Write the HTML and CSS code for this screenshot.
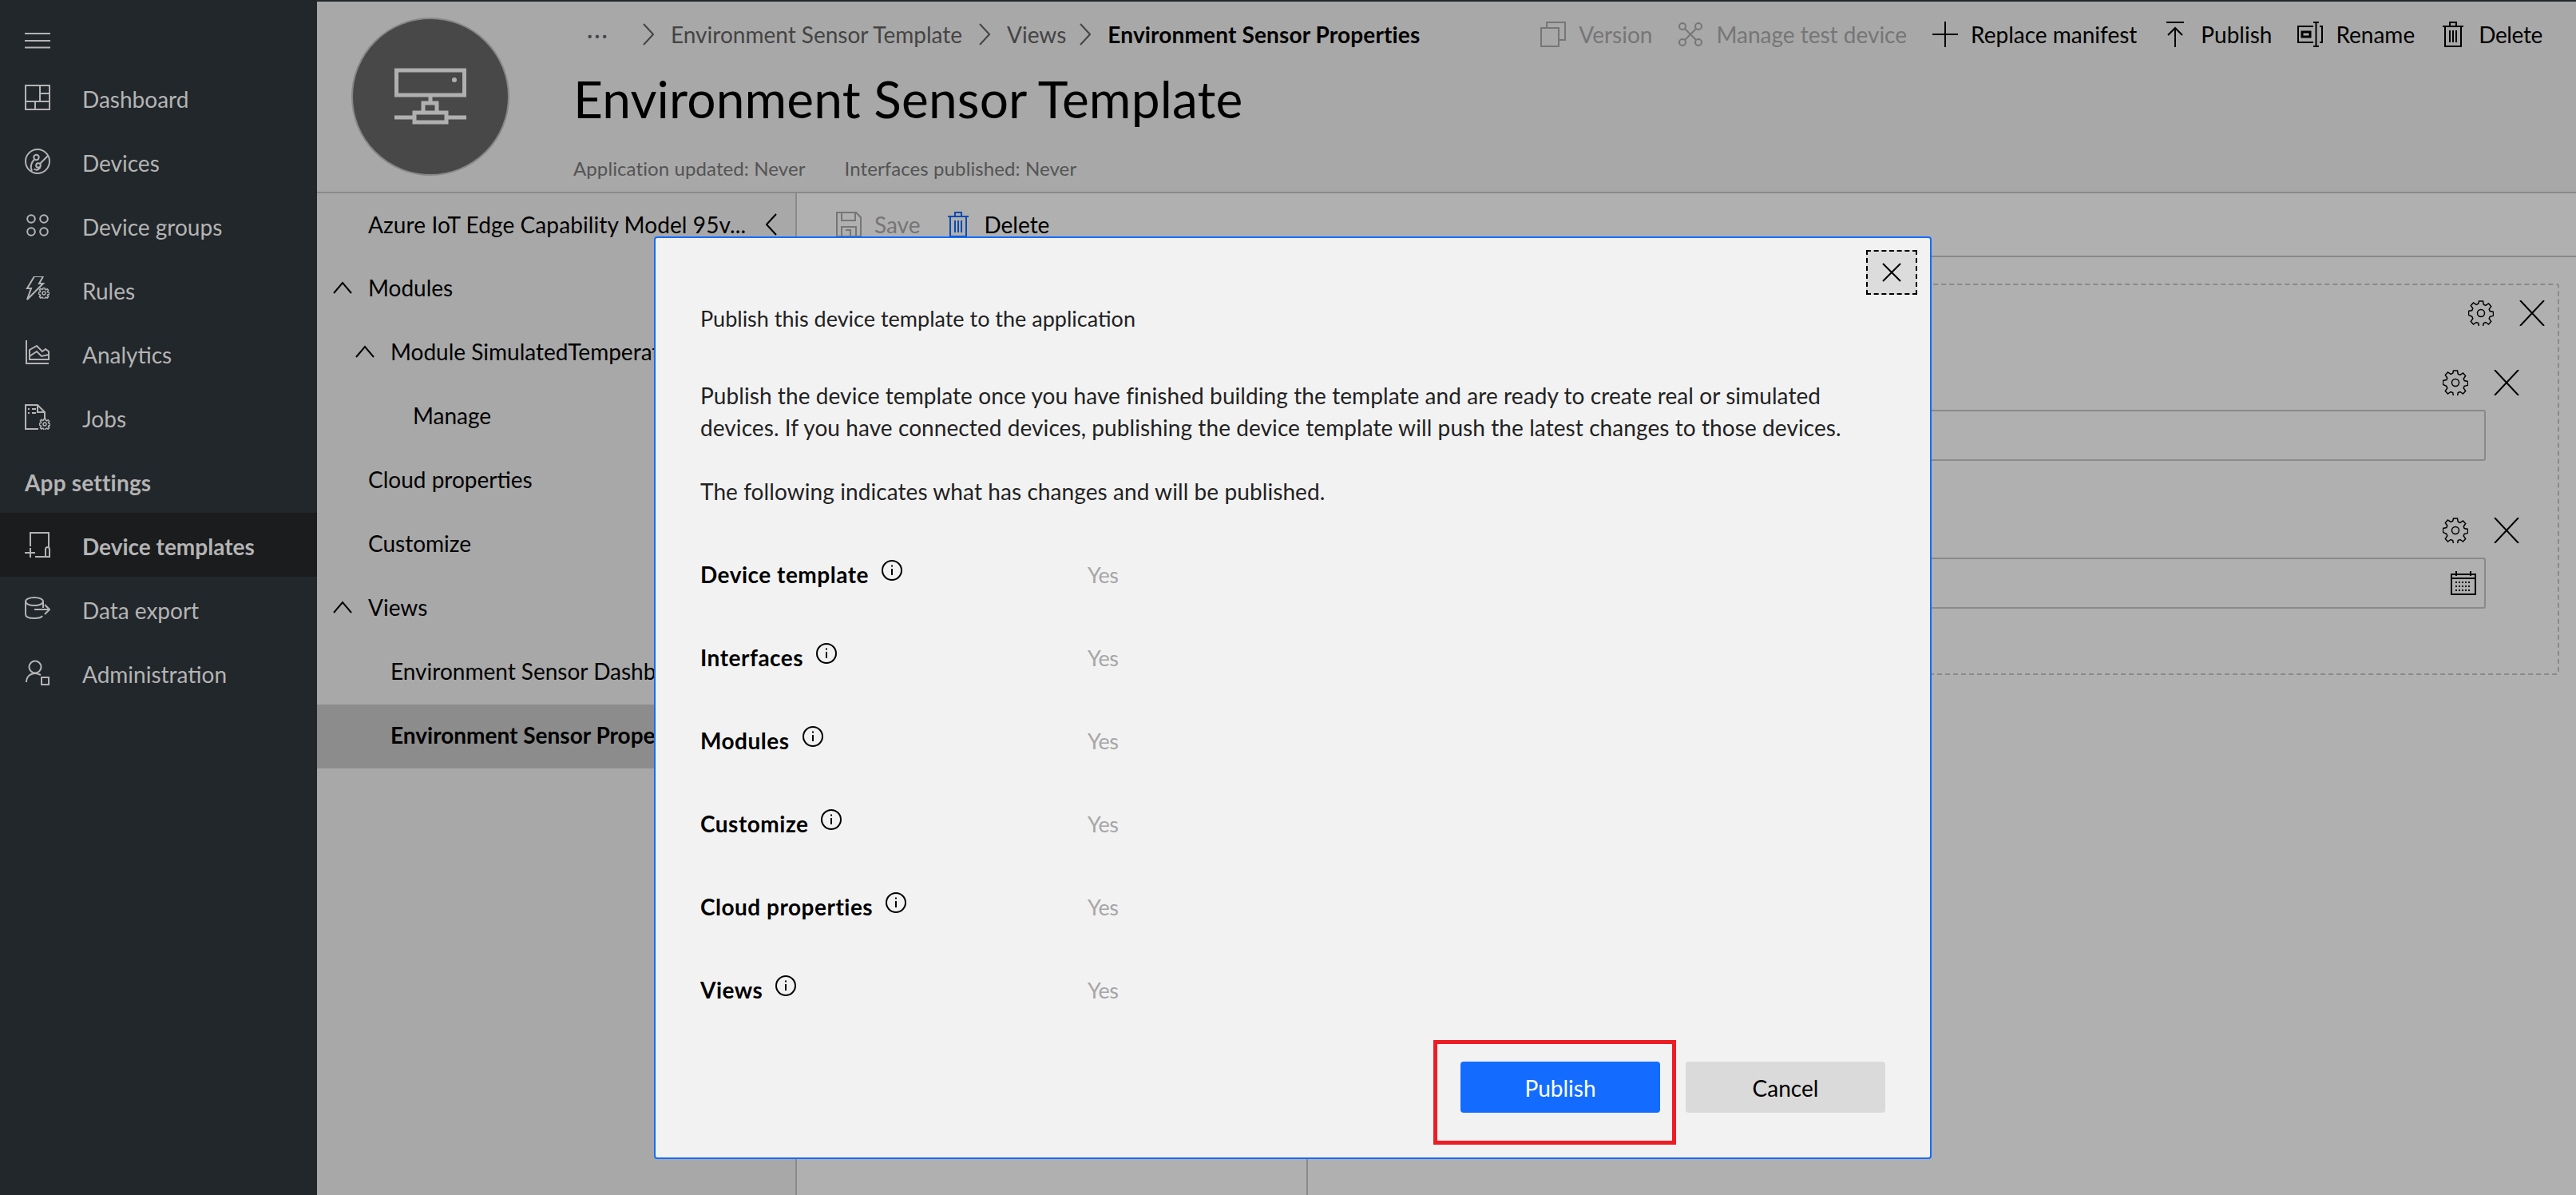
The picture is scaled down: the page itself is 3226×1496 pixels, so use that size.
FILE: index.html
```html
<!DOCTYPE html>
<html>
<head>
<title>Device templates</title>
<link rel="stylesheet" href="styles.css">
</head>
<body>
<svg class="defs" width="0" height="0">
  <symbol id="i-gear" viewBox="0 0 32 32"><path d="M13.5 1h5l.8 4.3 2.6 1.1 3.6-2.5 3.2 3.6-2.5 3.5 1 2.6 4.3.9v4.9l-4.3.9-1 2.6 2.5 3.5-3.2 3.6-3.6-2.5-2.6 1.1-.8 4.3h-5l-.8-4.3-2.6-1.1-3.6 2.5-3.2-3.6 2.5-3.5-1-2.6L.5 18.4v-4.9l4.3-.9 1-2.6-2.5-3.5 3.2-3.6 3.6 2.5 2.6-1.1z"/><circle cx="16" cy="16" r="4.5"/></symbol>
  <symbol id="i-x" viewBox="0 0 32 32"><path d="M1 0l30 32M31 0L1 32"/></symbol>
  <symbol id="i-info" viewBox="0 0 26 26"><circle cx="13" cy="13" r="12"/><path d="M13 11v8M13 6.500v2"/></symbol>
  <symbol id="i-up" viewBox="0 0 24 16"><path d="M1 15L12 2l11 13"/></symbol>
</svg>

<div class="topline"></div>
<div class="app">
  <nav class="nav">
    <div class="burger">
      <svg width="32" height="20" viewBox="0 0 32 20"><path d="M0 1h32M0 10h32M0 18.500h32"/></svg>
    </div>
    <a class="nav-item"><svg viewBox="0 0 32 32"><path d="M1 1h30v30H1zM19 1v20M1 21h30M19 11h12M13 21v10"/></svg>Dashboard</a>
    <a class="nav-item"><svg viewBox="0 0 32 32"><circle cx="16" cy="16" r="15"/><circle cx="14.500" cy="11" r="3.200"/><circle cx="17" cy="21" r="2.800"/><path d="M19 19L29 9M12 13.500C8 18 6.500 23 9 28M19.500 23.500c-2 3-5 4-8 2"/></svg>Devices</a>
    <a class="nav-item"><svg viewBox="0 0 32 32"><circle cx="8" cy="8" r="4.800"/><circle cx="24" cy="8" r="4.800"/><circle cx="8" cy="24" r="4.800"/><circle cx="24" cy="24" r="4.800"/></svg>Device groups</a>
    <a class="nav-item"><svg viewBox="0 0 32 32"><path d="M12 0h11l-5 9h5L3 29l5-14H3z"/><use class="mini-gear" href="#i-gear" x="17" y="14" width="14" height="14"/></svg>Rules</a>
    <a class="nav-item"><svg viewBox="0 0 32 32"><path d="M2 0v29h28M6 24V12l9-5 7 7 4-3 4 3v10zM6 20l9-6 6 6 9-2"/></svg>Analytics</a>
    <a class="nav-item"><svg viewBox="0 0 32 32"><path d="M17 31H1V1h15l9 9v8M16 1v9h9M4 6h2M9 6h5M4 11h2M9 11h5"/><use class="mini-gear" href="#i-gear" x="18" y="18" width="14" height="14"/></svg>Jobs</a>
    <div class="nav-section">App settings</div>
    <a class="nav-item active"><svg viewBox="0 0 32 32"><path d="M7 18V1h23v18M13 31h19M0 26h13M7 20v12M26 31v-9c0-4 5-4 5 0v9"/></svg>Device templates</a>
    <a class="nav-item"><svg viewBox="0 0 32 32"><ellipse cx="12" cy="7" rx="11" ry="5"/><path d="M1 7v16c0 4 6 5 11 5s9-1 10-3M23 7v8M12 17h19M25 11l6 6-6 6"/></svg>Data export</a>
    <a class="nav-item"><svg viewBox="0 0 32 32"><circle cx="13" cy="9" r="7.500"/><path d="M2 28c0-7 5-11 11-11 3 0 5 1 7 2"/><rect x="21" y="22" width="9" height="9"/></svg>Administration</a>
  </nav>

  <main class="main">
    <header class="header">
      <div class="avatar">
        <svg width="92" height="72" viewBox="0 0 92 72"><path d="M3.500 3h85v31h-85zM46 34v10M37 56V44h17v12M26 68V56h40v12zM1 62h25M66 62h25"/><circle cx="76" cy="15" r="3" class="fill"/></svg>
      </div>
      <div class="header-col">
        <div class="header-top">
          <div class="crumbs">
            <span class="more">&middot;&middot;&middot;</span>
            <svg class="chev" viewBox="0 0 14 28"><path d="M1 1l12 13L1 27"/></svg>
            <span>Environment Sensor Template</span>
            <svg class="chev" viewBox="0 0 14 28"><path d="M1 1l12 13L1 27"/></svg>
            <span>Views</span>
            <svg class="chev last" viewBox="0 0 14 28"><path d="M1 1l12 13L1 27"/></svg>
            <b>Environment Sensor Properties</b>
          </div>
          <div class="commands">
            <span class="cmd off"><svg viewBox="0 0 32 32"><path d="M1 8h22v23H1zM8 8V1h23v22h-8"/></svg>Version</span>
            <span class="cmd off"><svg viewBox="0 0 32 32"><circle cx="6" cy="6" r="4"/><circle cx="26" cy="6" r="4"/><circle cx="6" cy="26" r="4"/><circle cx="26" cy="26" r="4"/><path d="M9 9l14 14M23 9L9 23"/></svg>Manage test device</span>
            <span class="cmd"><svg viewBox="0 0 32 32"><path d="M16 0v32M0 16h32"/></svg>Replace manifest</span>
            <span class="cmd"><svg viewBox="0 0 32 32"><path d="M5 1h22M16 32V8M7 17l9-9 9 9"/></svg>Publish</span>
            <span class="cmd"><svg viewBox="0 0 32 32"><path d="M20 6H1v20h19M28 6h3v20h-3M20 1h7M20 31h7M23.500 1v30" /><path class="thick" d="M6 13h10v6H6z"/></svg>Rename</span>
            <span class="cmd tight"><svg viewBox="0 0 32 32"><path d="M3 6h26M6 6v25h20V6M12 6V1h8v5M12 11v15M16 11v15M20 11v15"/></svg>Delete</span>
          </div>
        </div>
        <h1 class="title">Environment Sensor Template</h1>
        <div class="meta"><span>Application updated: Never</span><span>Interfaces published: Never</span></div>
      </div>
    </header>

    <div class="body">
      <aside class="tree">
        <div class="tree-head"><span>Azure IoT Edge Capability Model 95v...</span><svg class="chev" viewBox="0 0 14 28"><path d="M13 1L1 14l12 13"/></svg></div>
        <div class="tree-row lvl0"><svg class="up"><use href="#i-up"/></svg>Modules</div>
        <div class="tree-row lvl1"><svg class="up"><use href="#i-up"/></svg>Module SimulatedTemperatureSensor</div>
        <div class="tree-row leaf2">Manage</div>
        <div class="tree-row leaf0">Cloud properties</div>
        <div class="tree-row leaf0">Customize</div>
        <div class="tree-row lvl0"><svg class="up"><use href="#i-up"/></svg>Views</div>
        <div class="tree-row leaf1">Environment Sensor Dashboard</div>
        <div class="tree-row leaf1 selected">Environment Sensor Properties</div>
      </aside>

      <section class="content">
        <div class="toolbar">
          <span class="cmd off"><svg viewBox="0 0 32 32"><path d="M1 1h24l6 6v24H1zM7 1v10h17V1M7 31V19h18v12M12 23h6v8"/></svg>Save</span>
          <span class="cmd blue"><svg viewBox="0 0 32 32"><path d="M3 6h26M6 6v25h20V6M12 6V1h8v5M12 11v15M16 11v15M20 11v15"/></svg><em>Delete</em></span>
        </div>
        <div class="canvas">
          <div class="list"></div>
          <div class="designer">
            <div class="dropzone">
              <div class="actions top"><svg class="gear"><use href="#i-gear"/></svg><svg class="cross"><use href="#i-x"/></svg></div>
              <div class="actions first"><svg class="gear"><use href="#i-gear"/></svg><svg class="cross"><use href="#i-x"/></svg></div>
              <div class="field"></div>
              <div class="actions second"><svg class="gear"><use href="#i-gear"/></svg><svg class="cross"><use href="#i-x"/></svg></div>
              <div class="field date">
                <svg width="32" height="30" viewBox="0 0 32 30"><path d="M1 4h30v25H1zM1 9h30M7 0v6M25 0v6"/><path class="dots" d="M6 14h20M6 19h20M6 24h20"/></svg>
              </div>
            </div>
          </div>
        </div>
      </section>
    </div>

    <div class="scrim">
      <div class="dialog">
        <div class="dialog-top">
          <button class="close"><svg width="24" height="24" viewBox="0 0 24 24"><path d="M1 1l22 22M23 1L1 23"/></svg></button>
        </div>
        <p class="intro">Publish this device template to the application</p>
        <p class="para">Publish the device template once you have finished building the template and are ready to create real or simulated<br>devices. If you have connected devices, publishing the device template will push the latest changes to those devices.</p>
        <p class="para next">The following indicates what has changes and will be published.</p>
        <div class="rows">
          <div class="row"><div class="label"><b>Device template</b><svg class="info"><use href="#i-info"/></svg></div><span class="yes">Yes</span></div>
          <div class="row"><div class="label"><b>Interfaces</b><svg class="info"><use href="#i-info"/></svg></div><span class="yes">Yes</span></div>
          <div class="row"><div class="label"><b>Modules</b><svg class="info"><use href="#i-info"/></svg></div><span class="yes">Yes</span></div>
          <div class="row"><div class="label"><b>Customize</b><svg class="info"><use href="#i-info"/></svg></div><span class="yes">Yes</span></div>
          <div class="row"><div class="label"><b>Cloud properties</b><svg class="info"><use href="#i-info"/></svg></div><span class="yes">Yes</span></div>
          <div class="row"><div class="label"><b>Views</b><svg class="info"><use href="#i-info"/></svg></div><span class="yes">Yes</span></div>
        </div>
        <div class="dialog-foot">
          <div class="publish-wrap">
            <button class="btn primary">Publish</button>
            <div class="callout"></div>
          </div>
          <button class="btn">Cancel</button>
        </div>
      </div>
    </div>
  </main>
</div>
</body>
</html>
```

FILE: styles.css
```css
* {
  box-sizing: border-box;
}
html, body {
  margin: 0;
  height: 100%;
  overflow: hidden;
}
body {
  font-family: "Lato", "Open Sans", sans-serif;
  font-size: 28px;
  color: #000;
  background-color: #fff;
}
svg {
  fill: none;
  stroke: currentColor;
  stroke-width: 2;
  flex: none;
}
.defs {
  position: absolute;
}
.topline {
  height: 2px;
  background-color: #22272b;
}
.app {
  display: flex;
  height: 1494px;
}

/* left nav */
.nav {
  width: 397px;
  flex: none;
  background-color: #22272b;
  color: #b4b4b4;
}
.burger {
  height: 80px;
  padding: 31px 0 0 31px;
}
.nav-item, .nav-section {
  display: flex;
  align-items: center;
  height: 80px;
  padding: 4px 0 0 31px;
}
.nav-item svg {
  width: 32px;
  height: 32px;
  margin: -4px 40px 0 0;
}
.mini-gear {
  stroke-width: 3.5;
}
.nav-section {
  font-weight: 700;
  letter-spacing: 0.2px;
}
.active {
  background-color: #1a1c1e;
  font-weight: 700;
}

/* page */
.main {
  position: relative;
  flex: 1;
  min-width: 0;
  display: flex;
  flex-direction: column;
}
.header {
  display: flex;
  height: 240px;
  flex: none;
  background-color: #f4f4f4;
  border-bottom: 2px solid #c8c8c8;
}
.avatar {
  width: 198px;
  height: 198px;
  margin: 20px 0 0 43px;
  border-radius: 50%;
  background-color: #696969;
  border: 2px solid #c4c4c4;
  color: #fff;
  display: flex;
  align-items: center;
  justify-content: center;
  flex: none;
}
.avatar svg {
  stroke-width: 5;
}
.avatar .fill {
  fill: #fff;
  stroke: none;
}
.header-col {
  flex: 1;
  margin-left: 80px;
  padding-right: 42px;
}
.header-top {
  display: flex;
  justify-content: space-between;
  align-items: center;
  height: 82px;
}
.crumbs {
  display: flex;
  align-items: center;
  color: #636363;
  padding-left: 17px;
}
.crumbs b {
  color: #000;
  font-weight: 700;
  letter-spacing: 0.15px;
}
.more {
  width: 70px;
  letter-spacing: 2px;
}
.chev {
  width: 14px;
  height: 28px;
  margin: 0 21px;
}
.more + .chev {
  margin-left: 0;
}
.chev.last {
  margin-left: 17px;
}
.commands {
  display: flex;
}
.cmd {
  display: flex;
  align-items: center;
  margin-left: 32px;
}
.cmd svg {
  width: 32px;
  height: 32px;
  margin-right: 16px;
}
.cmd .thick {
  stroke-width: 3;
}
.tight {
  letter-spacing: -0.35px;
}
.off {
  color: #ababab;
}
.blue {
  color: #136cff;
}
.blue em {
  color: #000;
  font-style: normal;
}
.title {
  margin: 0;
  height: 80px;
  line-height: 80px;
  font-size: 64px;
  font-weight: 400;
  letter-spacing: 0.15px;
}
.meta {
  padding-top: 18px;
  display: flex;
  gap: 49px;
  font-size: 24px;
  letter-spacing: 0.1px;
  line-height: 58px;
  color: #7a7a7a;
}

.body {
  flex: 1;
  display: flex;
  min-height: 0;
}
.tree {
  width: 601px;
  flex: none;
  border-right: 2px solid #c8c8c8;
  background-color: #f4f4f4;
}
.tree-head {
  display: flex;
  align-items: center;
  justify-content: space-between;
  height: 80px;
  padding: 0 23px 2px 64px;
  letter-spacing: 0.1px;
}
.tree-head .chev {
  margin: 0;
}
.tree-row {
  display: flex;
  align-items: center;
  height: 80px;
  padding-bottom: 4px;
  white-space: nowrap;
  overflow: hidden;
}
.up {
  width: 24px;
  height: 16px;
  margin-right: 20px;
}
.lvl0 {
  padding-left: 20px;
}
.lvl1 {
  padding-left: 48px;
}
.leaf0 {
  padding-left: 64px;
}
.leaf1 {
  padding-left: 92px;
}
.leaf2 {
  padding-left: 120px;
}
.selected {
  background-color: #cbcbcb;
  font-weight: 700;
}

.content {
  flex: 1;
  display: flex;
  flex-direction: column;
  min-width: 0;
}
.toolbar {
  display: flex;
  align-items: center;
  height: 80px;
  flex: none;
  border-bottom: 2px solid #c8c8c8;
  padding-left: 17px;
}
.toolbar .cmd {
  margin-left: 32px;
}
.canvas {
  flex: 1;
  display: flex;
}
.list {
  width: 640px;
  flex: none;
  border-right: 2px solid #c8c8c8;
}
.designer {
  flex: 1;
  padding: 33px 21px 0 30px;
}
.dropzone {
  height: 490px;
  border: 2px dashed #c8c8c8;
  border-radius: 3px;
}
.actions {
  display: flex;
  justify-content: flex-end;
  gap: 32px;
}
.actions.top {
  padding: 19px 16px 0 0;
}
.actions.first {
  margin-top: 55px;
  padding-right: 48px;
}
.actions.second {
  margin-top: 71px;
  padding-right: 48px;
}
.gear, .cross {
  width: 32px;
  height: 32px;
}
.gear {
  stroke-width: 1.5;
}
.field {
  height: 64px;
  margin: 18px 90px 0 0;
  border: 2px solid #c8c8c8;
  border-radius: 3px;
  background-color: #fff;
}
.date {
  display: flex;
  align-items: center;
  justify-content: flex-end;
  padding-right: 10px;
}
.dots {
  stroke-dasharray: 2 2;
}

/* publish dialog */
.scrim {
  position: absolute;
  inset: 0;
  background-color: rgba(0, 0, 0, 0.31);
}
.dialog {
  position: absolute;
  left: 422px;
  top: 294px;
  width: 1600px;
  height: 1155px;
  background-color: #f2f2f2;
  border: 2px solid #136cff;
  border-radius: 4px;
  padding: 0 56px;
  font-size: 28px;
  color: #222;
}
.dialog-top {
  display: flex;
  justify-content: flex-end;
  margin-right: -40px;
  padding-top: 15px;
}
.close {
  display: flex;
  align-items: center;
  justify-content: center;
  width: 64px;
  height: 56px;
  padding: 0;
  background-color: #dcdcdc;
  border: 2px dashed #000;
  color: #000;
}
.intro, .para {
  margin: 0;
  line-height: 40px;
}
.intro {
  margin-top: 10px;
  font-size: 27px;
}
.para {
  margin-top: 56px;
  letter-spacing: 0.08px;
}
.para.next {
  margin-top: 40px;
}
.rows {
  margin-top: 32px;
}
.row {
  display: flex;
  align-items: center;
  height: 104px;
}
.label {
  width: 485px;
  display: flex;
  align-items: center;
  gap: 16px;
  color: #000;
  letter-spacing: 0.5px;
}
.info {
  width: 26px;
  height: 26px;
  margin-bottom: 10px;
}
.yes {
  color: #a6a6a6;
  font-size: 27px;
  letter-spacing: -0.5px;
}
.dialog-foot {
  display: flex;
  justify-content: flex-end;
  gap: 32px;
  margin-top: 38px;
}
.publish-wrap {
  position: relative;
}
.btn {
  display: block;
  width: 250px;
  height: 64px;
  padding: 2px 0 0;
  border: none;
  border-radius: 4px;
  background-color: #dadada;
  font: inherit;
  color: #000;
}
.primary {
  background-color: #136cff;
  color: #fff;
}
.callout {
  position: absolute;
  left: -34px;
  right: -20px;
  top: -27px;
  bottom: -40px;
  border: 5px solid #ee1c25;
}
```
